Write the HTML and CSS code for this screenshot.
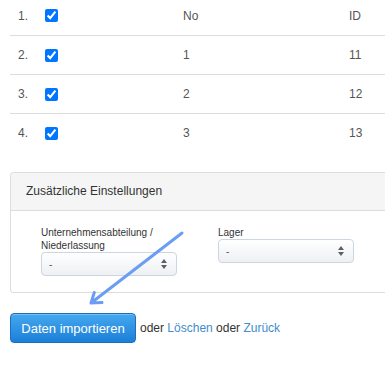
FILE: index.html
```html
<!DOCTYPE html>
<html lang="de">
<head>
<meta charset="utf-8">
<title>Import</title>
<link rel="stylesheet" href="styles.css">
</head>
<body>
<div class="page">
  <div class="table">
    <div class="row first">
      <span>1.</span>
      <span><input type="checkbox" checked></span>
      <span>No</span>
      <span>ID</span>
    </div>
    <div class="row">
      <span>2.</span>
      <span><input type="checkbox" checked></span>
      <span>1</span>
      <span>11</span>
    </div>
    <div class="row">
      <span>3.</span>
      <span><input type="checkbox" checked></span>
      <span>2</span>
      <span>12</span>
    </div>
    <div class="row">
      <span>4.</span>
      <span><input type="checkbox" checked></span>
      <span>3</span>
      <span>13</span>
    </div>
  </div>

  <div class="panel">
    <div class="panel-head">Zusätzliche Einstellungen</div>
    <div class="panel-body">
      <div class="field">
        <label class="label">Unternehmensabteilung / Niederlassung</label>
        <div class="select">
          <span>-</span>
          <svg class="updown" width="6" height="10" viewBox="0 0 6 10"><path d="M3 0 L6 4 L0 4 Z M0 6 L6 6 L3 10 Z" fill="#5a5f66"/></svg>
        </div>
      </div>
      <div class="field">
        <label class="label">Lager</label>
        <div class="select">
          <span>-</span>
          <svg class="updown" width="6" height="10" viewBox="0 0 6 10"><path d="M3 0 L6 4 L0 4 Z M0 6 L6 6 L3 10 Z" fill="#5a5f66"/></svg>
        </div>
      </div>
    </div>
  </div>

  <div class="actions">
    <button class="btn" type="button">Daten importieren</button>
    <span class="alt">oder <a href="#">Löschen</a> oder <a href="#">Zurück</a></span>
  </div>
</div>

<svg class="arrow" width="385" height="368" viewBox="0 0 385 368">
  <path d="M182 233 L91 303 M91 303 L102 302.5 M91 303 L94.3 292.5" stroke="#6b9ef2" stroke-width="3" fill="none" stroke-linecap="round" stroke-linejoin="round"/>
</svg>
</body>
</html>
```

FILE: styles.css
```css
html, body {
  margin: 0;
  padding: 0;
}
body {
  font-family: "Liberation Sans", Arial, sans-serif;
  background: #fff;
  overflow: hidden;
  width: 385px;
  height: 368px;
  position: relative;
}
.page {
  padding-left: 10px;
}
.row {
  display: grid;
  grid-template-columns: 27px 138px 166px 1fr;
  align-items: center;
  height: 39px;
  box-sizing: border-box;
  padding-left: 8px;
  border-top: 1px solid #dddddd;
  font-size: 12px;
  color: #555;
}
.row.first {
  height: 35px;
  border-top: none;
  padding-bottom: 4px;
}
.row span {
  display: flex;
  align-items: center;
}
.row input {
  margin: 0;
  width: 13px;
  height: 13px;
  accent-color: #0075ff;
}
.panel {
  margin-top: 20px;
  border: 1px solid #dddddd;
  border-right: none;
  border-radius: 4px 0 0 4px;
  background: #fff;
}
.panel-head {
  height: 37px;
  line-height: 37px;
  padding-left: 15px;
  background: #f5f5f5;
  border-bottom: 1px solid #dddddd;
  border-radius: 4px 0 0 0;
  font-size: 12px;
  color: #333;
}
.panel-body {
  display: flex;
  gap: 41px;
  padding: 15px 30px 16px;
}
.field {
  width: 136px;
  display: flex;
  flex-direction: column;
}
.label {
  font-size: 10px;
  line-height: 13px;
  color: #333;
}
.select {
  height: 24px;
  box-sizing: border-box;
  border: 1px solid #cdd6e0;
  border-radius: 4px;
  background: linear-gradient(#ffffff, #eef0f3);
  display: flex;
  align-items: center;
  justify-content: space-between;
  padding: 0 9px 0 7px;
  font-size: 10px;
  color: #555;
}
.actions {
  margin-top: 20px;
  display: flex;
  align-items: center;
  gap: 4px;
}
.btn {
  height: 30px;
  width: 126px;
  padding: 0;
  border: 1px solid #1b6fbf;
  border-radius: 4px;
  background: linear-gradient(#45a8ef, #1b7fd8);
  color: #fff;
  font-family: "Liberation Sans", Arial, sans-serif;
  font-size: 13px;
  box-shadow: inset 0 1px 0 rgba(255,255,255,0.25);
}
.alt {
  font-size: 12px;
  color: #333;
}
.alt a {
  color: #3f8ccc;
  text-decoration: none;
}
.arrow {
  position: absolute;
  left: 0;
  top: 0;
  pointer-events: none;
}
```
